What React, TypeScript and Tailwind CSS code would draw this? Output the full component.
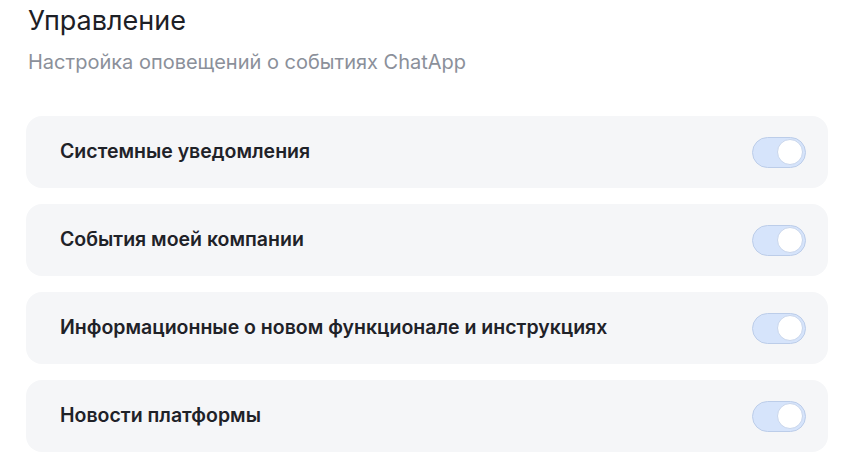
import React, { useState } from 'react';

const items = [
  'Системные уведомления',
  'События моей компании',
  'Информационные о новом функционале и инструкциях',
  'Новости платформы',
];

const Toggle = ({ on, onChange }: { on: boolean; onChange: () => void }) => (
  <button
    onClick={onChange}
    className={`w-[54px] h-[31px] rounded-full border p-[2px] flex items-center transition-colors ${
      on ? 'bg-[#d6e4fb] border-[#bccde9] justify-end' : 'bg-[#e5e7eb] border-[#d1d5db] justify-start'
    }`}
  >
    <span className="w-[26px] h-[26px] rounded-full bg-white border border-[#c9d6ec]" />
  </button>
);

export default function App() {
  const [state, setState] = useState<boolean[]>([true, true, true, true]);

  return (
    <div className="w-[844px] h-[467px] bg-white px-[26px] pt-[3px] font-['Inter',sans-serif] overflow-hidden">
      <h1 className="text-[27px] leading-[36px] text-[#1d2026] px-[2px]">Управление</h1>
      <p className="text-[20px] leading-[28px] text-[#8b909a] mt-[9px] px-[2px]">Настройка оповещений о событиях ChatApp</p>

      {/* Settings list */}
      <div className="flex flex-col gap-[16px] mt-[40px] w-[802px]">
        {items.map((label, i) => (
          <div key={label} className="h-[72px] rounded-[16px] bg-[#f5f6f8] pl-[34px] pr-[22px] flex items-center justify-between">
            <span className="text-[19.5px] font-semibold text-[#1f2228]">{label}</span>
            <Toggle on={state[i]} onChange={() => setState(s => s.map((v, j) => (j === i ? !v : v)))} />
          </div>
        ))}
      </div>
    </div>
  );
}
